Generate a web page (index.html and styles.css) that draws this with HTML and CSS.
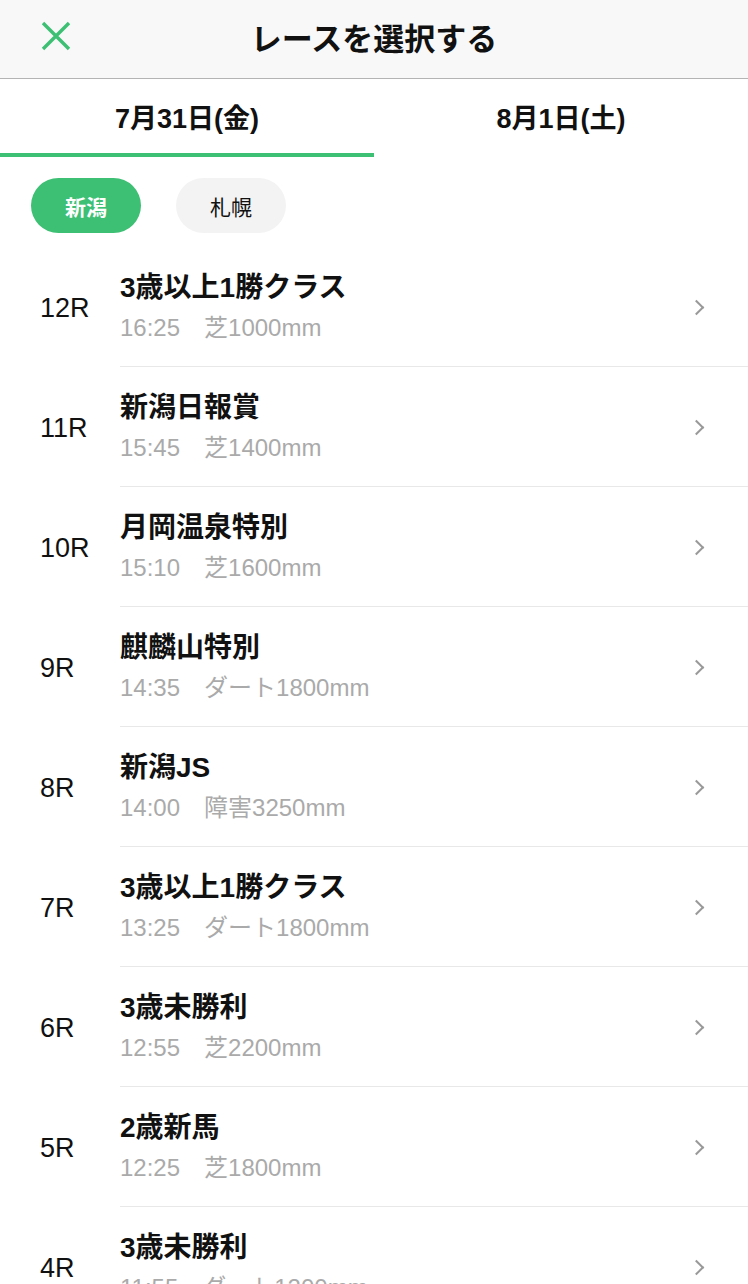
FILE: index.html
```html
<!DOCTYPE html>
<html lang="ja">
<head>
  <meta charset="UTF-8" />
  <meta name="viewport" content="width=device-width, initial-scale=1" />
  <title>レースを選択する</title>
  <link rel="stylesheet" href="styles.css">
</head>
<body>
  <header class="topbar">
    <span class="close">
      <svg width="30" height="30" viewBox="0 0 30 30"><path d="M2 2 L28 28 M28 2 L2 28" stroke="#3dbf74" stroke-width="3.4" fill="none"/></svg>
    </span>
    <h1>レースを選択する</h1>
  </header>

  <nav class="tabs">
    <div class="tab active">7月31日(金)</div>
    <div class="tab">8月1日(土)</div>
  </nav>

  <div class="chips">
    <span class="chip on">新潟</span>
    <span class="chip">札幌</span>
  </div>

  <ul class="races">
    <li><span class="num">12R</span><div class="info"><b>3歳以上1勝クラス</b><small>16:25　芝1000mm</small></div><i class="arrow"></i></li>
    <li><span class="num">11R</span><div class="info"><b>新潟日報賞</b><small>15:45　芝1400mm</small></div><i class="arrow"></i></li>
    <li><span class="num">10R</span><div class="info"><b>月岡温泉特別</b><small>15:10　芝1600mm</small></div><i class="arrow"></i></li>
    <li><span class="num">9R</span><div class="info"><b>麒麟山特別</b><small>14:35　ダート1800mm</small></div><i class="arrow"></i></li>
    <li><span class="num">8R</span><div class="info"><b>新潟JS</b><small>14:00　障害3250mm</small></div><i class="arrow"></i></li>
    <li><span class="num">7R</span><div class="info"><b>3歳以上1勝クラス</b><small>13:25　ダート1800mm</small></div><i class="arrow"></i></li>
    <li><span class="num">6R</span><div class="info"><b>3歳未勝利</b><small>12:55　芝2200mm</small></div><i class="arrow"></i></li>
    <li><span class="num">5R</span><div class="info"><b>2歳新馬</b><small>12:25　芝1800mm</small></div><i class="arrow"></i></li>
    <li><span class="num">4R</span><div class="info"><b>3歳未勝利</b><small>11:55　ダート1200mm</small></div><i class="arrow"></i></li>
  </ul>
</body>
</html>
```

FILE: styles.css
```css
body {
  margin: 0;
  font-family: "Liberation Sans", "Noto Sans CJK JP", sans-serif;
  background: #fff;
  color: #111;
  overflow: hidden;
}
.topbar {
  height: 78px;
  background: #f8f8f8;
  border-bottom: 1px solid #b4b4b4;
  display: flex;
  align-items: center;
  justify-content: center;
  position: relative;
}
.close {
  position: absolute;
  left: 41px;
  top: 21px;
}
.topbar h1 {
  margin: 0 0 6px;
  font-size: 31px;
  font-weight: bold;
}
.tabs {
  display: flex;
  height: 78px;
}
.tab {
  flex: 1;
  display: flex;
  align-items: center;
  justify-content: center;
  font-size: 27px;
  font-weight: bold;
  border-bottom: 4px solid transparent;
  box-sizing: border-box;
}
.tab.active {
  border-bottom-color: #3dbf74;
}
.chips {
  display: flex;
  gap: 35px;
  padding: 21px 31px 14px;
}
.chip {
  width: 110px;
  height: 55px;
  border-radius: 28px;
  background: #f3f3f3;
  display: flex;
  align-items: center;
  justify-content: center;
  font-size: 21px;
}
.chip.on {
  background: #3dbf74;
  color: #fff;
  font-weight: bold;
}
.races {
  list-style: none;
  margin: 0;
  padding: 0;
}
.races li {
  height: 120px;
  display: flex;
  align-items: center;
  position: relative;
}
.races li::after {
  content: "";
  position: absolute;
  left: 120px;
  right: 0;
  bottom: 0;
  height: 1px;
  background: #e8e8e8;
}
.num {
  width: 120px;
  padding-left: 40px;
  box-sizing: border-box;
  font-size: 27px;
  padding-top: 2px;
}
.info {
  flex: 1;
  display: flex;
  flex-direction: column;
  gap: 5px;
  margin-top: -2px;
}
.info b {
  font-size: 28px;
  line-height: 38px;
}
.info small {
  font-size: 24px;
  color: #aaa;
  line-height: 32px;
}
.arrow {
  width: 9px;
  height: 9px;
  border-top: 2px solid #999;
  border-right: 2px solid #999;
  transform: rotate(45deg);
  margin-right: 46px;
}
```
